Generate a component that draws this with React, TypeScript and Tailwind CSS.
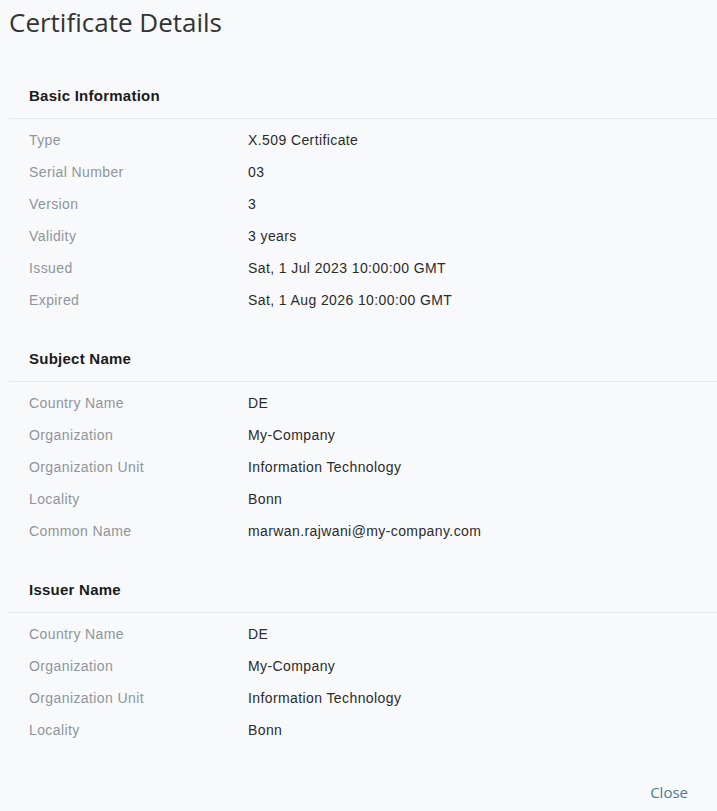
const basicInfo: [string, string][] = [
  ["Type", "X.509 Certificate"],
  ["Serial Number", "03"],
  ["Version", "3"],
  ["Validity", "3 years"],
  ["Issued", "Sat, 1 Jul 2023 10:00:00 GMT"],
  ["Expired", "Sat, 1 Aug 2026 10:00:00 GMT"],
];

const subjectName: [string, string][] = [
  ["Country Name", "DE"],
  ["Organization", "My-Company"],
  ["Organization Unit", "Information Technology"],
  ["Locality", "Bonn"],
  ["Common Name", "marwan.rajwani@my-company.com"],
];

const issuerName: [string, string][] = [
  ["Country Name", "DE"],
  ["Organization", "My-Company"],
  ["Organization Unit", "Information Technology"],
  ["Locality", "Bonn"],
];

interface SectionProps {
  title: string;
  rows: [string, string][];
}

function Section({ title, rows }: SectionProps) {
  return (
    <section>
      <div className="border-b border-[#e6e8eb] pb-3 pl-5">
        <h2 className="text-[15px] font-bold leading-5 tracking-[0.25px] text-[#1b1b1b]">
          {title}
        </h2>
      </div>
      <div className="pt-[5px]">
        {rows.map(([label, value]) => (
          <div key={label} className="flex h-8 items-center pl-5 text-[14px] tracking-[0.4px]">
            <span className="w-[219px] shrink-0 text-[#8e959b]">{label}</span>
            <span className="text-[#2b2b2b]">{value}</span>
          </div>
        ))}
      </div>
    </section>
  );
}

export default function App() {
  return (
    <div
      className="flex min-h-[811px] w-full flex-col bg-[#f8f9fb] pl-[9px]"
      style={{ fontFamily: '"Liberation Sans", Arial, sans-serif' }}
    >
      <h1
        className="h-11 pt-[6px] text-[26px] leading-8 text-[#333]"
        style={{ fontFamily: '"Open Sans", sans-serif' }}
      >
        Certificate Details
      </h1>
      <div className="mt-[42px] flex flex-col gap-[33px]">
        <Section title="Basic Information" rows={basicInfo} />
        <Section title="Subject Name" rows={subjectName} />
        <Section title="Issuer Name" rows={issuerName} />
      </div>
      <div className="mt-auto flex justify-end pb-[8px] pr-[29px]">
        <button
          className="text-[15px] text-[#4a7d94]"
          style={{ fontFamily: '"Open Sans", sans-serif' }}
        >
          Close
        </button>
      </div>
    </div>
  );
}
